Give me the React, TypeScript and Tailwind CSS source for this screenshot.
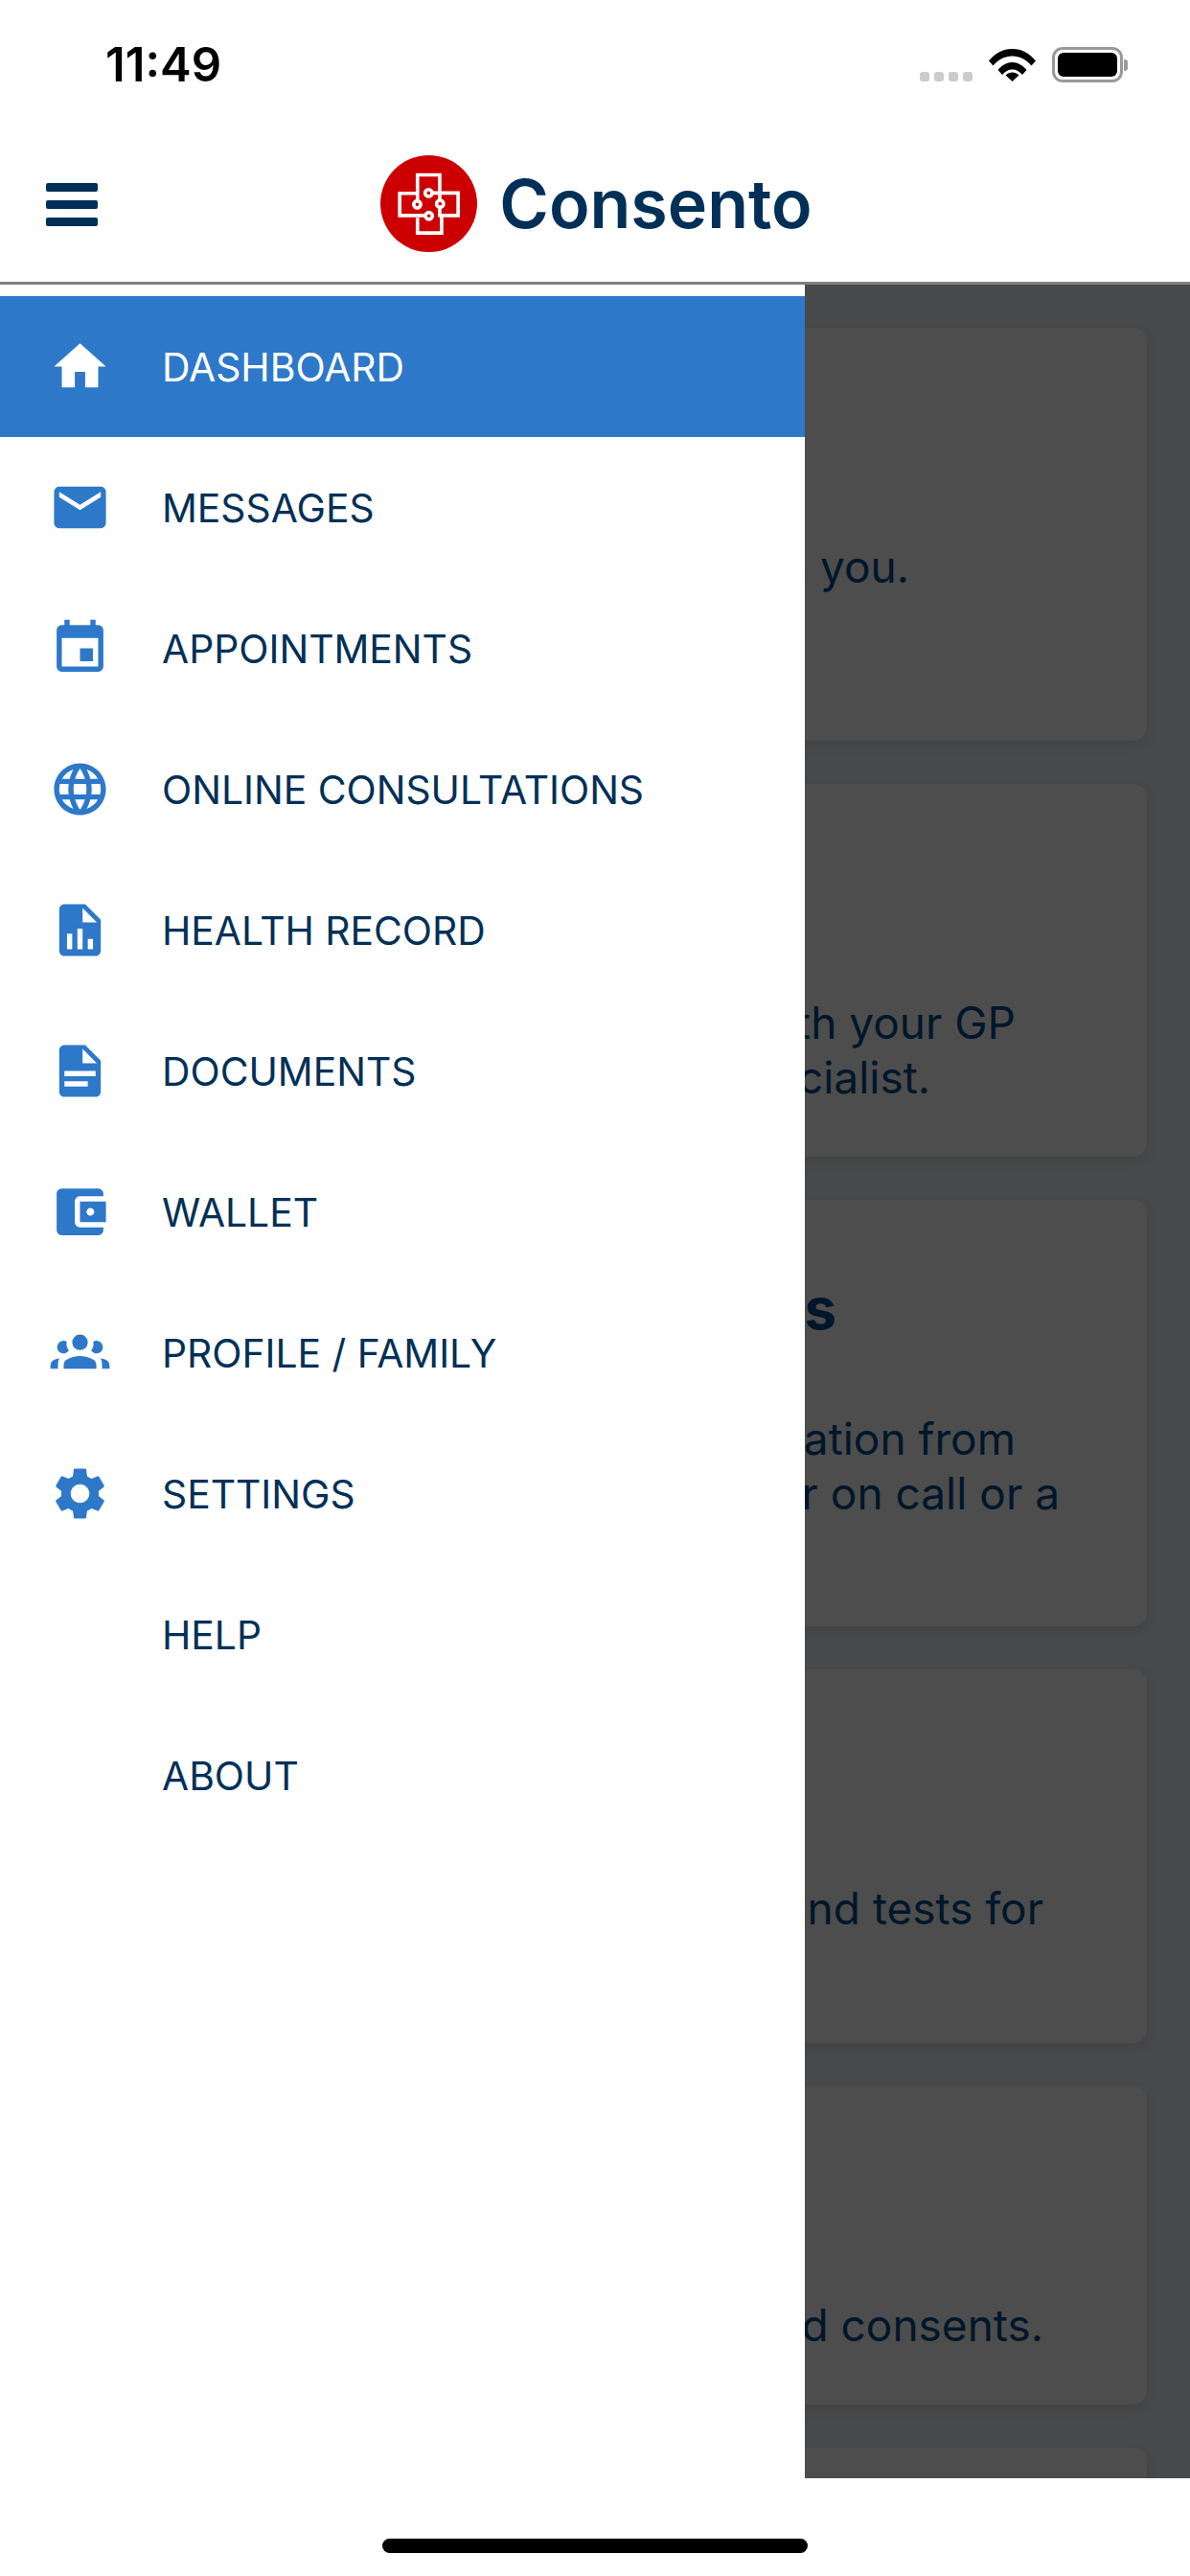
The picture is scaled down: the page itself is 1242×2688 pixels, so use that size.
import React from "react";

const P = {
  home: "M10 20v-6h4v6h5v-8h3L12 3 2 12h3v8z",
  mail: "M20 4H4c-1.1 0-1.99.9-1.99 2L2 18c0 1.1.9 2 2 2h16c1.1 0 2-.9 2-2V6c0-1.1-.9-2-2-2zm0 4l-8 5-8-5V6l8 5 8-5v2z",
  event: "M17 12h-5v5h5v-5zM16 1v2H8V1H6v2H5c-1.11 0-1.99.9-1.99 2L3 19c0 1.1.89 2 2 2h14c1.1 0 2-.9 2-2V5c0-1.1-.9-2-2-2h-1V1h-2zm3 18H5V8h14v11z",
  globe: "M11.99 2C6.47 2 2 6.48 2 12s4.47 10 9.99 10C17.52 22 22 17.52 22 12S17.52 2 11.99 2zm6.93 6h-2.95c-.32-1.25-.78-2.45-1.38-3.56 1.84.63 3.37 1.91 4.33 3.56zM12 4.04c.83 1.2 1.48 2.53 1.91 3.96h-3.82c.43-1.43 1.08-2.76 1.91-3.96zM4.26 14C4.1 13.36 4 12.69 4 12s.1-1.36.26-2h3.38c-.08.66-.14 1.32-.14 2 0 .68.06 1.34.14 2H4.26zm.82 2h2.95c.32 1.25.78 2.45 1.38 3.56-1.84-.63-3.37-1.9-4.33-3.56zm2.95-8H5.08c.96-1.66 2.49-2.93 4.33-3.56C8.81 5.55 8.35 6.75 8.03 8zM12 19.96c-.83-1.2-1.48-2.53-1.91-3.96h3.82c-.43 1.43-1.08 2.76-1.91 3.96zM14.34 14H9.66c-.09-.66-.16-1.32-.16-2 0-.68.07-1.35.16-2h4.68c.09.65.16 1.32.16 2 0 .68-.07 1.34-.16 2zm.25 5.56c.6-1.11 1.06-2.31 1.38-3.56h2.95c-.96 1.65-2.49 2.93-4.33 3.56zM16.36 14c.08-.66.14-1.32.14-2 0-.68-.06-1.34-.14-2h3.38c.16.64.26 1.31.26 2s-.1 1.36-.26 2h-3.38z",
  chart: "M14 2H6c-1.1 0-2 .9-2 2v16c0 1.1.9 2 2 2h12c1.1 0 2-.9 2-2V8l-6-6zM13 3.5V9h5.5L13 3.5zM9 19.4H7v-6h2v6zm4 0h-2v-8h2v8zm4 0h-2v-4h2v4z",
  doc: "M14 2H6c-1.1 0-2 .9-2 2v16c0 1.1.9 2 2 2h12c1.1 0 2-.9 2-2V8l-6-6zM13 3.5V9h5.5L13 3.5zM6 12h12v2H6v-2zm0 4h9v2H6v-2z",
  wallet: "M21 18v1c0 1.1-.9 2-2 2H5c-1.11 0-2-.9-2-2V5c0-1.1.89-2 2-2h14c1.1 0 2 .9 2 2v1h-9c-1.11 0-2 .9-2 2v8c0 1.1.89 2 2 2h9zm-9-2h10V8H12v8zm4-2.5c-.83 0-1.5-.67-1.5-1.5s.67-1.5 1.5-1.5 1.500.67 1.5 1.5-.67 1.5-1.5 1.5z",
  groups: "M12 5a3 3 0 1 1 0 6 3 3 0 0 1 0-6zM6.900 7.750a2.450 2.450 0 1 0 .8 3.450 4.400 4.400 0 0 1-.8-3.450zM17.100 7.750a2.450 2.450 0 1 1-.8 3.450 4.400 4.400 0 0 0 .8-3.450zM5.700 18.200v-1.400c0-1.100.6-2 1.700-2.400 1.400-.7 3-1.100 4.600-1.100s3.200.4 4.600 1.100c1.100.4 1.700 1.300 1.700 2.400v1.400zM.6 18.200v-1.200c0-1 .6-1.800 1.400-2.200.6-.3 1.300-.5 2.100-.6-.4.6-.6 1.400-.6 2.400v1.600zM23.400 18.200v-1.200c0-1-.6-1.800-1.400-2.200-.6-.3-1.300-.5-2.100-.6.4.6.6 1.400.6 2.400v1.600z",
  gear: "M19.14 12.94c.04-.3.06-.61.06-.94 0-.32-.02-.64-.07-.94l2.03-1.58c.18-.14.23-.41.12-.61l-1.92-3.32c-.12-.22-.37-.29-.59-.22l-2.39.96c-.5-.38-1.03-.7-1.62-.94l-.36-2.54c-.04-.24-.24-.41-.48-.41h-3.84c-.24 0-.43.17-.47.41l-.36 2.54c-.59.24-1.13.57-1.62.94l-2.39-.96c-.22-.08-.47 0-.59.22L2.74 8.87c-.12.21-.08.47.12.61l2.03 1.58c-.05.3-.09.63-.09.94s.02.64.07.94l-2.03 1.58c-.18.14-.23.41-.12.61l1.92 3.32c.12.22.37.29.59.22l2.39-.96c.5.38 1.03.7 1.62.94l.36 2.54c.05.24.24.41.48.41h3.84c.24 0 .44-.17.47-.41l.36-2.54c.59-.24 1.13-.56 1.62-.94l2.39.96c.22.08.47 0 .59-.22l1.92-3.32c.12-.22.07-.47-.12-.61l-2.01-1.58zM12 15.6c-1.98 0-3.6-1.62-3.6-3.6s1.62-3.6 3.6-3.6 3.6 1.62 3.6 3.6-1.62 3.6-3.6 3.6z",
};

const items: { label: string; icon?: string; active?: boolean }[] = [
  { label: "DASHBOARD", icon: P.home, active: true },
  { label: "MESSAGES", icon: P.mail },
  { label: "APPOINTMENTS", icon: P.event },
  { label: "ONLINE CONSULTATIONS", icon: P.globe },
  { label: "HEALTH RECORD", icon: P.chart },
  { label: "DOCUMENTS", icon: P.doc },
  { label: "WALLET", icon: P.wallet },
  { label: "PROFILE / FAMILY", icon: P.groups },
  { label: "SETTINGS", icon: P.gear },
  { label: "HELP" },
  { label: "ABOUT" },
];

function Logo() {
  return (
    <svg viewBox="110 67 305 305" className="w-[101px] h-[101px] shrink-0">
      <circle cx="262.5" cy="219.5" r="152.5" fill="#cc0000" />
      <g fill="none" stroke="#fff" strokeWidth="11">
        <path d="M227 208V129H297V206" />
        <path d="M276 186H355V257H303V312H227V264" />
        <path d="M227 187H171V257H249" />
        <path d="M297 234V262" />
        <circle cx="226" cy="222" r="11" />
        <circle cx="262" cy="186" r="11" />
        <circle cx="298" cy="220" r="11" />
        <circle cx="263" cy="258" r="11" />
      </g>
    </svg>
  );
}

function StatusIcons() {
  return (
    <div className="flex items-end h-[37px]">
      <div className="flex gap-[5px] mb-[1px]">
        <span className="w-[10px] h-[10px] rounded-[3px] bg-[#cccccc]" />
        <span className="w-[10px] h-[10px] rounded-[3px] bg-[#cccccc]" />
        <span className="w-[10px] h-[10px] rounded-[3px] bg-[#cccccc]" />
        <span className="w-[10px] h-[10px] rounded-[3px] bg-[#cccccc]" />
      </div>
      <svg viewBox="0 0 49 34" className="w-[49px] h-[34px] ml-[17px] mb-[1px]">
        <path d="M0 12.500C6.500 4.500 15 0 24.500 0S42.500 4.500 49 12.500L44.500 17.500C39 11 32 7.500 24.500 7.500S10 11 4.500 17.500Z" fill="#000" />
        <path d="M9.500 22C13.500 17 19 14 24.500 14S35.500 17 39.500 22L35 27C32 23.500 28.500 21.500 24.500 21.500S17 23.500 14 27Z" fill="#000" />
        <path d="M24.500 34L17.500 27.500C19.500 25.500 22 24.500 24.500 24.500S29.500 25.500 31.500 27.500Z" fill="#000" />
      </svg>
      <div className="flex items-center ml-[17px]">
        <div className="w-[74px] h-[37px] rounded-[11px] border-[3px] border-[#999999] p-[3px]">
          <div className="w-full h-full rounded-[6px] bg-black" />
        </div>
        <div className="w-[4px] h-[12px] rounded-r-[3px] bg-[#999999] ml-[1px]" />
      </div>
    </div>
  );
}

function Line({ text, pr }: { text: string; pr: string }) {
  return <p className={`text-right whitespace-nowrap ${pr}`}>{text}</p>;
}

const card = "rounded-[14px] bg-[#4d4d4d] shadow-[0_4px_12px_rgba(0,0,0,0.1)]";

export default function App() {
  return (
    <div
      className="w-[1242px] h-[2688px] flex flex-col bg-white overflow-hidden"
      style={{ fontFamily: "Inter, 'Liberation Sans', sans-serif" }}
    >
      <header className="h-[297px] shrink-0 border-b-[3px] border-[#808080] bg-white flex flex-col">
        <div className="h-[136px] shrink-0 flex items-start justify-between pt-[49px] pl-[110px] pr-[65px]">
          <span className="text-[49px] leading-[38px] font-semibold text-black">11:49</span>
          <StatusIcons />
        </div>
        <div className="relative flex items-center justify-center h-[101px] mt-[26px]">
          <div className="absolute left-[48px] top-[29px] flex flex-col gap-[9px]">
            <span className="w-[54px] h-[9px] rounded-[2px] bg-[#003057]" />
            <span className="w-[54px] h-[9px] rounded-[2px] bg-[#003057]" />
            <span className="w-[54px] h-[9px] rounded-[2px] bg-[#003057]" />
          </div>
          <div className="flex items-center gap-[23px] ml-[3px]">
            <Logo />
            <span className="text-[70px] leading-[80px] font-semibold text-[#003057]">Consento</span>
          </div>
        </div>
      </header>

      <main className="relative flex-1 bg-[#48494b] overflow-hidden">
        <div className="flex flex-col gap-[45px] pt-[45px] pl-[46px] pr-[45px] text-[46px] leading-[57px] text-[#00162a]">
          <section className={`h-[431px] pt-[221px] ${card}`}>
            <Line text="Read messages sent between you." pr="pr-[248px]" />
          </section>
          <section className={`h-[389px] pt-[221px] ${card}`}>
            <Line text="Book appointments with your GP" pr="pr-[137px]" />
            <Line text="or a specialist." pr="pr-[226px]" />
          </section>
          <section className={`h-[445px] pt-[85px] ${card}`}>
            <p className="text-right whitespace-nowrap pr-[324px] text-[60px] leading-[56px] font-bold">Consults</p>
            <div className="mt-[80px]">
              <Line text="Get medical information from" pr="pr-[137px]" />
              <Line text="a doctor on call or a" pr="pr-[91px]" />
            </div>
          </section>
          <section className={`h-[390px] pt-[221px] ${card}`}>
            <Line text="View your results and tests for" pr="pr-[108px]" />
          </section>
          <section className={`h-[332px] pt-[221px] ${card}`}>
            <Line text="View your documents and consents." pr="pr-[108px]" />
          </section>
          <section className={`h-[300px] ${card}`} />
        </div>

        <nav className="absolute inset-y-0 left-0 w-[840px] bg-white pt-[12px]">
          {items.map((it) => (
            <div key={it.label} className={`h-[147px] flex items-center ${it.active ? "bg-[#2d78c9]" : ""}`}>
              <div className="w-[169px] shrink-0 flex justify-center pr-[3px]">
                {it.icon && (
                  <svg viewBox="0 0 24 24" className="w-[65px] h-[65px]" fill={it.active ? "#fff" : "#2d78c9"}>
                    <path d={it.icon} fillRule="evenodd" />
                  </svg>
                )}
              </div>
              <span className={`text-[40.800px] leading-[36px] ${it.active ? "text-white" : "text-[#003057]"}`}>{it.label}</span>
            </div>
          ))}
        </nav>
      </main>

      <footer className="h-[102px] shrink-0 bg-white flex justify-center pt-[63px]">
        <div className="w-[444px] h-[15px] rounded-full bg-black" />
      </footer>
    </div>
  );
}
